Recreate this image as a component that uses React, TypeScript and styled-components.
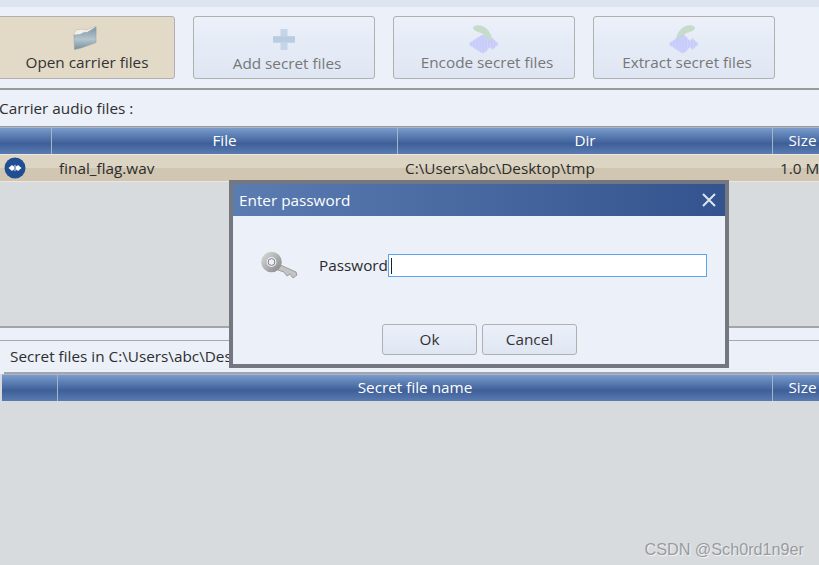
import React from "react";
import styled, { createGlobalStyle } from "styled-components";

const Global = createGlobalStyle`
  html, body { margin: 0; padding: 0; background: #d8dbde; }
  * { box-sizing: border-box; }
`;

const Page = styled.div`
  position: relative;
  width: 819px;
  height: 565px;
  overflow: hidden;
  background: #d8dbde;
  font-family: "Open Sans", "Noto Sans", sans-serif;
  font-size: 15.3px;
  color: #2a2a2a;
`;

const TopStrip = styled.div`
  height: 7px;
  background: #dee5f0;
`;

const Toolbar = styled.div`
  display: flex;
  gap: 18px;
  height: 83px;
  padding: 9px 0 0 0;
  margin-left: -7px;
  background: #ebf0f9;
  border-bottom: 2px solid #9a9a9a;
`;

const ToolButton = styled.div<{ $active?: boolean }>`
  flex: 0 0 182px;
  height: 63px;
  display: flex;
  flex-direction: column;
  align-items: center;
  border: 1px solid #b0b0b0;
  border-radius: 3px;
  background: ${(p) => (p.$active ? "#e2d9c7" : "linear-gradient(#ebf0f9, #dfe6f3)")};
  color: ${(p) => (p.$active ? "#333" : "#777")};
  line-height: 20px;
  white-space: nowrap;
`;

const ToolIcon = styled.div<{ $top: number }>`
  height: 33px;
  padding-top: ${(p) => p.$top}px;
  display: flex;
  justify-content: center;
`;

const ToolLabel = styled.div<{ $drop?: number }>`
  margin-top: ${(p) => 2 + (p.$drop ?? 0)}px;
  padding-left: 6px;
`;

const SectionLabel = styled.div`
  height: 37px;
  background: #ebf0f9;
  line-height: 36px;
  text-indent: -1px;
  color: #2e2e2e;
  border-bottom: 1px solid #9a9a9a;
`;

const TableHead = styled.div<{ $columns: string; $inset?: number }>`
  display: grid;
  grid-template-columns: ${(p) => p.$columns};
  height: 27px;
  margin-left: ${(p) => p.$inset ?? 0}px;
  width: 840px;
  border-top: 1px solid #a8b6cc;
  background: linear-gradient(#7b9bcb 0%, #5f82b6 25%, #3e5f98 60%, #5a7cb2 100%);
`;

const HeadCell = styled.div`
  color: #fff;
  text-align: center;
  line-height: 25px;
  border-left: 1px solid #a7b3c6;
  &:first-child { border-left: 0; }
`;

const FileRow = styled.div`
  display: grid;
  grid-template-columns: 52px 346px 375px 60px;
  height: 28px;
  width: 840px;
  border-top: 1px solid #ece7dc;
  border-bottom: 1px solid #ece7dc;
  background: linear-gradient(#ddd5c4 0 50%, #d0c6b1 50% 100%);
  line-height: 26px;
  white-space: nowrap;
`;

const RowIcon = styled.div`
  display: flex;
  align-items: center;
  padding-left: 4px;
`;

const RowCell = styled.div`
  padding-left: 7px;
  color: #2c2c2c;
`;

const Grey = styled.div<{ $h: number }>`
  height: ${(p) => p.$h}px;
  background: #d8dbde;
`;

const Splitter = styled.div`
  height: 15px;
  background: #ebf0f9;
  border-top: 2px solid #a3a5ab;
  border-bottom: 1px solid #a8a8a8;
`;

const SecretLabel = styled.div`
  height: 31px;
  background: #ebf0f9;
  padding-left: 10px;
  line-height: 30px;
  color: #2e2e2e;
  white-space: nowrap;
`;

const SecretRule = styled.div`
  height: 2px;
  background: linear-gradient(90deg, #ebf0f9 4px, #a3a5ab 4px);
`;

const Dialog = styled.div`
  position: absolute;
  left: 229px;
  top: 180px;
  width: 500px;
  height: 188px;
  border: 4px solid #747680;
  background: #ebf0f9;
  display: flex;
  flex-direction: column;
`;

const TitleBar = styled.div`
  height: 32px;
  flex: none;
  display: flex;
  align-items: center;
  justify-content: space-between;
  padding: 0 9px 0 6px;
  background: linear-gradient(90deg, #5b7cb1, #33538e);
  color: #fff;
`;

const PasswordRow = styled.div`
  display: flex;
  align-items: center;
  margin-top: 37px;
  height: 24px;
  padding-left: 28px;
`;

const KeyBox = styled.div`
  width: 58px;
  display: flex;
`;

const FieldLabel = styled.div`
  width: 69px;
  color: #2a2a2a;
  white-space: nowrap;
`;

const Field = styled.div`
  width: 319px;
  height: 23px;
  border: 1px solid #5ea4ea;
  background: #fff;
  padding: 3px 0 0 2px;
`;

const Caret = styled.div`
  width: 1px;
  height: 16px;
  background: #222;
`;

const DialogButtons = styled.div`
  display: flex;
  gap: 5px;
  margin: 47px 0 0 149px;
`;

const DialogButton = styled.div`
  width: 95px;
  height: 31px;
  border: 1px solid #b0b0b0;
  border-radius: 3px;
  background: linear-gradient(#ebf0f9, #dfe6f3);
  color: #333;
  text-align: center;
  line-height: 29px;
`;

const Watermark = styled.div`
  position: absolute;
  right: 15px;
  bottom: 6px;
  font-family: "Liberation Sans", sans-serif;
  font-size: 16.2px;
  color: #989b9f;
  text-shadow: 1px 1px 1px #f4f4f4;
`;

const FolderIcon = () => (
  <svg width="25" height="24" viewBox="0 0 25 24">
    <defs>
      <linearGradient id="fold" x1="0" y1="0" x2="0" y2="1">
        <stop offset="0" stopColor="#7f95a2" />
        <stop offset="0.55" stopColor="#b4c5cd" />
        <stop offset="1" stopColor="#768e9b" />
      </linearGradient>
    </defs>
    <path d="M1.5 8 L4 4 L10 3 L14 4 L22 1 L24 0.5 L24 8 L3 12 Z" fill="#f2efe8" stroke="#b5b0a2" strokeWidth="0.5" />
    <path d="M2 9 L8 8.5 L12 6.5 L15 6.5 L19 4 L24 1 L24 16.5 L9 22 L2.5 23.5 Z" fill="url(#fold)" stroke="#8d9da6" strokeWidth="0.5" />
  </svg>
);

const PlusIcon = () => (
  <svg width="22" height="21" viewBox="0 0 22 21">
    <path d="M7.5 0 H14.5 V7 H22 V14 H14.5 V21 H7.5 V14 H0 V7 H7.5 Z" fill="#c5d5e8" />
    <path d="M0 7.5 H22 V13 H0 Z" fill="#b8cce2" />
  </svg>
);

const waveHeights = [3, 5, 7, 9, 11, 13, 15, 17, 18, 18, 16, 13, 9, 7, 9, 11, 8, 5, 3];

const WaveIcon = ({ flip }: { flip?: boolean }) => (
  <svg width="30" height="29" viewBox="0 0 30 29">
    <g transform={flip ? "translate(30 0) scale(-1 1)" : undefined}>
      <path d="M4 2 C8 -1 14 0 18 4 C21 7 23 11 24 18 L19 17 C18 12 14 8 9 7 C6 6 4 5 4 2 Z" fill="#c6dccb" />
    </g>
    <g fill="#c8ccfa">
      {waveHeights.map((h, i) => (
        <rect key={i} x={0.5 + i * 1.5} y={19 - h / 2} width={1.6} height={h} />
      ))}
    </g>
  </svg>
);

const KeyIcon = () => (
  <svg width="37" height="28" viewBox="0 0 37 28">
    <defs>
      <linearGradient id="keyg" x1="0" y1="0" x2="1" y2="1">
        <stop offset="0" stopColor="#d2d2d2" />
        <stop offset="1" stopColor="#8f8f8f" />
      </linearGradient>
    </defs>
    <path d="M17 13 L35 21 L36 24 L32 27 L29 23 L26 25 L23 21 L14 18 Z" fill="#c4c4c4" stroke="#8d8d8d" strokeWidth="0.8" />
    <circle cx="10.5" cy="11" r="7.6" fill="none" stroke="url(#keyg)" strokeWidth="5.4" />
    <circle cx="10.5" cy="11" r="3.4" fill="#ebf0f9" stroke="#7e7e7e" strokeWidth="1" />
  </svg>
);

const PlayIcon = () => (
  <svg width="22" height="22" viewBox="0 0 22 22">
    <circle cx="11" cy="11" r="10.5" fill="#1f4f92" />
    <path d="M4.5 11 L8 8 L9.5 9.5 L10.5 7.5 V14.5 L9.5 12.5 L8 14 Z M17.5 11 L14 8 L12.5 9.5 L11.5 7.5 V14.5 L12.5 12.5 L14 14 Z" fill="#fff" />
  </svg>
);

const CloseIcon = () => (
  <svg width="14" height="14" viewBox="0 0 14 14">
    <path d="M1 1 L13 13 M13 1 L1 13" stroke="#dfe5ef" strokeWidth="2" />
  </svg>
);

export default function App() {
  return (
    <Page>
      <Global />
      <TopStrip />
      <Toolbar>
        <ToolButton $active>
          <ToolIcon $top={9}><FolderIcon /></ToolIcon>
          <ToolLabel>Open carrier files</ToolLabel>
        </ToolButton>
        <ToolButton>
          <ToolIcon $top={12}><PlusIcon /></ToolIcon>
          <ToolLabel $drop={1}>Add secret files</ToolLabel>
        </ToolButton>
        <ToolButton>
          <ToolIcon $top={8}><WaveIcon /></ToolIcon>
          <ToolLabel>Encode secret files</ToolLabel>
        </ToolButton>
        <ToolButton>
          <ToolIcon $top={8}><WaveIcon flip /></ToolIcon>
          <ToolLabel>Extract secret files</ToolLabel>
        </ToolButton>
      </Toolbar>
      <SectionLabel>Carrier audio files :</SectionLabel>
      <TableHead $columns="51px 346px 375px 60px">
        <HeadCell />
        <HeadCell>File</HeadCell>
        <HeadCell>Dir</HeadCell>
        <HeadCell>Size</HeadCell>
      </TableHead>
      <FileRow>
        <RowIcon><PlayIcon /></RowIcon>
        <RowCell>final_flag.wav</RowCell>
        <RowCell>C:\Users\abc\Desktop\tmp</RowCell>
        <RowCell>1.0 M</RowCell>
      </FileRow>
      <Grey $h={144} />
      <Splitter />
      <SecretLabel>Secret files in C:\Users\abc\Desktop\tmp\final_flag.wav</SecretLabel>
      <SecretRule />
      <TableHead $columns="55px 715px 60px" $inset={2}>
        <HeadCell />
        <HeadCell>Secret file name</HeadCell>
        <HeadCell>Size</HeadCell>
      </TableHead>
      <Dialog>
        <TitleBar>
          Enter password
          <CloseIcon />
        </TitleBar>
        <PasswordRow>
          <KeyBox><KeyIcon /></KeyBox>
          <FieldLabel>Password</FieldLabel>
          <Field><Caret /></Field>
        </PasswordRow>
        <DialogButtons>
          <DialogButton>Ok</DialogButton>
          <DialogButton>Cancel</DialogButton>
        </DialogButtons>
      </Dialog>
      <Watermark>CSDN @Sch0rd1n9er</Watermark>
    </Page>
  );
}
